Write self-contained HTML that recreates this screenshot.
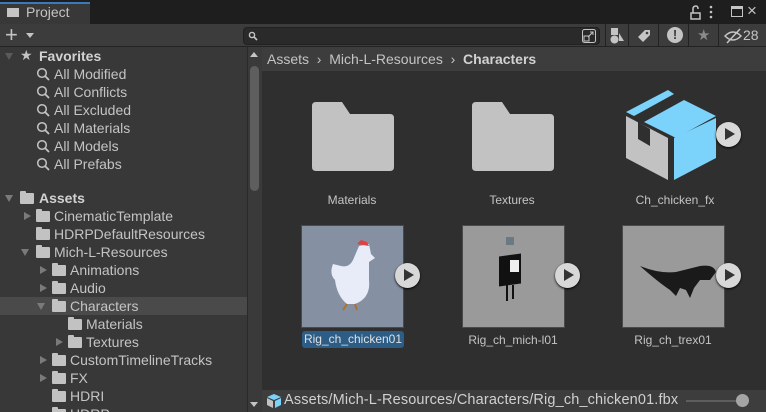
<!DOCTYPE html>
<html><head><style>
*{margin:0;padding:0;box-sizing:border-box}
html,body{width:766px;height:412px;overflow:hidden}
body{background:#383838;font-family:"Liberation Sans",sans-serif;font-size:14px;color:#c4c4c4;position:relative}
.a{position:absolute}
.row{position:absolute;left:0;width:247px;height:18px;line-height:18px;white-space:nowrap}
.tri{position:absolute;top:5px;width:0;height:0}
.tr{border-left:7px solid #7a7a7a;border-top:4px solid transparent;border-bottom:4px solid transparent;top:5px}
.td{border-top:7px solid #7a7a7a;border-left:4px solid transparent;border-right:4px solid transparent;top:6px}
.fd{position:absolute;top:4px;width:14px;height:11px;background:#c2c2c2;border-radius:1px}
.fd:before{content:"";position:absolute;left:0;top:-2px;width:6px;height:3px;background:#c2c2c2;border-radius:1px 1px 0 0}
.mg{position:absolute;left:36px;top:2px}
.lbl{position:absolute;font-size:12px;color:#c4c4c4;text-align:center;width:140px}
.play{position:absolute;width:25px;height:25px;border-radius:50%;background:#d8d8d8;box-shadow:0 1px 2px #000}
.play:after{content:"";position:absolute;left:9px;top:6px;border-left:10px solid #333;border-top:6.5px solid transparent;border-bottom:6.5px solid transparent}
.thumb{position:absolute;width:103px;height:103px;background:#9a9a9a;border:1px solid #4a4a4a}
</style></head><body>
<div class="a" style="left:0;top:0;width:766px;height:24px;background:#1e1e1e"></div>
<div class="a" style="left:0;top:2px;width:90px;height:22px;background:#383838;border-top:2px solid #3a79bb"></div>
<div class="a" style="left:7px;top:8px;width:12px;height:9px;background:#c4c4c4"></div>
<div class="a" style="left:26px;top:4px;font-size:14px;color:#c4c4c4">Project</div>
<svg class="a" style="left:688px;top:3px" width="40" height="18"><path d="M3 10H12V16H3Z M5 10V6Q5 3 8 3Q10 3 10 6" fill="none" stroke="#c4c4c4" stroke-width="1.5"/><circle cx="23" cy="4" r="1.3" fill="#c4c4c4"/><circle cx="23" cy="9" r="1.3" fill="#c4c4c4"/><circle cx="23" cy="14" r="1.3" fill="#c4c4c4"/></svg>
<div class="a" style="left:731px;top:6px;width:12px;height:11px;border:1.5px solid #c4c4c4;border-top-width:3px"></div>
<div class="a" style="left:747px;top:1px;font-size:17px;color:#c4c4c4">×</div>
<!-- toolbar -->
<div class="a" style="left:0;top:24px;width:766px;height:23px;background:#3c3c3c;border-bottom:1px solid #232323"></div>
<div class="a" style="left:5px;top:22px;font-size:22px;color:#c4c4c4">+</div>
<div class="a" style="left:26px;top:33px;border-top:5px solid #c4c4c4;border-left:4px solid transparent;border-right:4px solid transparent"></div>
<div class="a" style="left:243px;top:27px;width:357px;height:18px;background:#2a2a2a;border:1px solid #212121;border-radius:4px"></div>
<svg class="a" style="left:248px;top:31px" width="10" height="10"><circle cx="4" cy="4" r="2.6" fill="none" stroke="#c4c4c4" stroke-width="1.4"/><path d="M6 6L9 9" stroke="#c4c4c4" stroke-width="1.6"/></svg>
<svg class="a" style="left:581px;top:28px" width="16" height="16"><rect x="1.5" y="1.5" width="13" height="13" rx="2" fill="none" stroke="#c4c4c4"/><rect x="3" y="8" width="5" height="5" fill="none" stroke="#c4c4c4"/><path d="M7 9L12 4M9 4H12V7" stroke="#c4c4c4" fill="none"/></svg>
<div class="a" style="left:605px;top:24px;width:1px;height:22px;background:#222"></div>
<div class="a" style="left:628px;top:24px;width:1px;height:22px;background:#222"></div>
<div class="a" style="left:658px;top:24px;width:1px;height:22px;background:#222"></div>
<div class="a" style="left:688px;top:24px;width:1px;height:22px;background:#222"></div>
<div class="a" style="left:718px;top:24px;width:1px;height:22px;background:#222"></div>
<svg class="a" style="left:609px;top:27px" width="16" height="18"><rect x="2" y="1" width="7" height="7" fill="#c4c4c4"/><circle cx="5.5" cy="12.5" r="4" fill="#c4c4c4"/><path d="M10 6L15 14H10Z" fill="#c4c4c4"/></svg>
<svg class="a" style="left:636px;top:28px" width="16" height="16"><path d="M2 9L9 2H14V7L7 14Z" fill="#c4c4c4"/><circle cx="11" cy="5" r="1.3" fill="#3c3c3c"/></svg>
<div class="a" style="left:667px;top:27px;width:16px;height:16px;border-radius:50%;background:#c4c4c4;color:#3c3c3c;font-weight:bold;text-align:center;line-height:16px;font-size:13px">!</div>
<div class="a" style="left:697px;top:26px;font-size:15px;color:#8a8a8a">★</div>
<svg class="a" style="left:724px;top:28px" width="20" height="16"><path d="M1 8Q9 0 17 8Q9 16 1 8Z" fill="none" stroke="#c4c4c4" stroke-width="1.5"/><path d="M3 15L16 1" stroke="#c4c4c4" stroke-width="1.5"/></svg>
<div class="a" style="left:743px;top:27px;font-size:14px;color:#c4c4c4">28</div>
<!-- left panel -->
<div class="a" style="left:247px;top:47px;width:15px;height:365px;background:#3a3a3a;border-left:1px solid #2a2a2a"></div>
<div class="a" style="left:250px;top:66px;width:9px;height:125px;background:#5e5e5e;border-radius:5px"></div>
<div class="a" style="left:250px;top:52px;border-bottom:5px solid #c4c4c4;border-left:4px solid transparent;border-right:4px solid transparent"></div>
<div class="a" style="left:250px;top:402px;border-top:5px solid #c4c4c4;border-left:4px solid transparent;border-right:4px solid transparent"></div>

<svg width="0" height="0" style="position:absolute"><defs><symbol id="m" viewBox="0 0 14 14"><circle cx="6" cy="6" r="4.3" fill="none" stroke="#c4c4c4" stroke-width="1.5"/><path d="M9 9L13 13" stroke="#c4c4c4" stroke-width="1.8"/></symbol></defs></svg>

<div class="row" style="top:47px"><div class="tri td" style="left:5px;border-top-color:#5a5a5a"></div><span class="a" style="left:20px;top:-1px;font-size:14px">★</span><b class="a" style="left:39px;font-size:14px;color:#d2d2d2">Favorites</b></div>
<div class="row" style="top:65px"><svg class="mg" width="14" height="14"><use href="#m"/></svg><span class="a" style="left:54px">All Modified</span></div>
<div class="row" style="top:83px"><svg class="mg" width="14" height="14"><use href="#m"/></svg><span class="a" style="left:54px">All Conflicts</span></div>
<div class="row" style="top:101px"><svg class="mg" width="14" height="14"><use href="#m"/></svg><span class="a" style="left:54px">All Excluded</span></div>
<div class="row" style="top:119px"><svg class="mg" width="14" height="14"><use href="#m"/></svg><span class="a" style="left:54px">All Materials</span></div>
<div class="row" style="top:137px"><svg class="mg" width="14" height="14"><use href="#m"/></svg><span class="a" style="left:54px">All Models</span></div>
<div class="row" style="top:155px"><svg class="mg" width="14" height="14"><use href="#m"/></svg><span class="a" style="left:54px">All Prefabs</span></div>

<div class="row" style="top:189px"><div class="tri td" style="left:5px"></div><div class="fd" style="left:20px"></div><b class="a" style="left:39px;font-size:14px;color:#d2d2d2">Assets</b></div>
<div class="row" style="top:207px"><div class="tri tr" style="left:24px"></div><div class="fd" style="left:36px"></div><span class="a" style="left:54px">CinematicTemplate</span></div>
<div class="row" style="top:225px"><div class="fd" style="left:36px"></div><span class="a" style="left:54px">HDRPDefaultResources</span></div>
<div class="row" style="top:243px"><div class="tri td" style="left:21px"></div><div class="fd" style="left:36px"></div><span class="a" style="left:54px">Mich-L-Resources</span></div>
<div class="row" style="top:261px"><div class="tri tr" style="left:40px"></div><div class="fd" style="left:52px"></div><span class="a" style="left:70px">Animations</span></div>
<div class="row" style="top:279px"><div class="tri tr" style="left:40px"></div><div class="fd" style="left:52px"></div><span class="a" style="left:70px">Audio</span></div>
<div class="row" style="top:297px;background:#4a4a4a"><div class="tri td" style="left:37px"></div><div class="fd" style="left:52px"></div><span class="a" style="left:70px">Characters</span></div>
<div class="row" style="top:315px"><div class="fd" style="left:68px"></div><span class="a" style="left:86px">Materials</span></div>
<div class="row" style="top:333px"><div class="tri tr" style="left:56px"></div><div class="fd" style="left:68px"></div><span class="a" style="left:86px">Textures</span></div>
<div class="row" style="top:351px"><div class="tri tr" style="left:40px"></div><div class="fd" style="left:52px"></div><span class="a" style="left:70px">CustomTimelineTracks</span></div>
<div class="row" style="top:369px"><div class="tri tr" style="left:40px"></div><div class="fd" style="left:52px"></div><span class="a" style="left:70px">FX</span></div>
<div class="row" style="top:387px"><div class="fd" style="left:52px"></div><span class="a" style="left:70px">HDRI</span></div>
<div class="row" style="top:405px;height:7px;overflow:hidden"><div class="fd" style="left:52px"></div><span class="a" style="left:70px">HDRP</span></div>

<!-- right panel -->
<div class="a" style="left:262px;top:47px;width:504px;height:343px;background:#2f2f2f"></div>
<div class="a" style="left:262px;top:47px;width:504px;height:24px;background:#3d3d3d;line-height:24px;font-size:14px;padding-left:5px;color:#c4c4c4">Assets &nbsp;›&nbsp; Mich-L-Resources &nbsp;›&nbsp; <b style="color:#d2d2d2">Characters</b></div>

<svg class="a" style="left:312px;top:100px" width="82" height="72"><path d="M4 2H30L38 14H78Q82 14 82 18V67Q82 71 78 71H4Q0 71 0 67V6Q0 2 4 2Z" fill="#c2c2c2"/></svg>
<svg class="a" style="left:472px;top:100px" width="82" height="72"><path d="M4 2H30L38 14H78Q82 14 82 18V67Q82 71 78 71H4Q0 71 0 67V6Q0 2 4 2Z" fill="#c2c2c2"/></svg>
<div class="lbl" style="left:282px;top:193px">Materials</div>
<div class="lbl" style="left:442px;top:193px">Textures</div>

<svg class="a" style="left:626px;top:88px" width="92" height="92">
<path d="M0 24L42 2L48 6L8 28Z" fill="#7bd3fb"/>
<path d="M18 34L58 12L90 28L50 50Z" fill="#7bd3fb"/>
<path d="M0 28L42 50V92L0 70Z" fill="#c2c2c2"/>
<path d="M48 50L90 30V70L48 92Z" fill="#7bd3fb"/>
<path d="M12 34L24 41V58L12 51Z" fill="#2f2f2f"/>
</svg>
<div class="play" style="left:716px;top:122px"></div>
<div class="lbl" style="left:605px;top:193px">Ch_chicken_fx</div>

<div class="thumb" style="left:301px;top:225px;background:#8590a2"></div>
<svg class="a" style="left:325px;top:240px" width="60" height="80"><path d="M34 6L44 4L46 14L50 18L44 22L44 40Q46 58 30 64L22 64Q12 56 10 40Q4 34 8 24L16 26Q24 28 28 20Z" fill="#e8ecf8"/><path d="M32 4L36 0L42 2L44 6Z" fill="#e04040"/><path d="M22 64L18 70M30 64L32 70" stroke="#b07030" stroke-width="2"/></svg>
<div class="play" style="left:395px;top:263px"></div>
<div class="a" style="left:302px;top:331px;width:102px;height:17px;background:#2c5d87;border-radius:3px;font-size:12px;line-height:17px;text-align:center;color:#e0e0e0">Rig_ch_chicken01</div>

<div class="thumb" style="left:462px;top:225px"></div>
<div class="a" style="left:506px;top:237px;width:8px;height:8px;background:#6a7a80"></div>
<div class="a" style="left:499px;top:255px;width:22px;height:30px;background:#111;transform:skewY(-8deg)"></div>
<div class="a" style="left:510px;top:260px;width:9px;height:12px;background:#eee"></div>
<div class="a" style="left:506px;top:285px;width:2px;height:16px;background:#111"></div>
<div class="a" style="left:512px;top:285px;width:2px;height:14px;background:#111"></div>
<div class="play" style="left:555px;top:263px"></div>
<div class="lbl" style="left:443px;top:333px">Rig_ch_mich-l01</div>

<div class="thumb" style="left:622px;top:225px"></div>
<svg class="a" style="left:640px;top:262px" width="84" height="40"><path d="M0 4Q20 12 36 10L60 4Q74 2 76 10L70 18L60 18L54 26L50 36L46 28L40 26L36 34L30 28Q18 20 0 4Z" fill="#1a1a1a"/></svg>
<div class="play" style="left:716px;top:263px"></div>
<div class="lbl" style="left:603px;top:333px">Rig_ch_trex01</div>

<!-- status bar -->
<div class="a" style="left:262px;top:390px;width:504px;height:22px;background:#3d3d3d"></div>
<svg class="a" style="left:266px;top:393px" width="16" height="16"><path d="M1 4L8 1L15 4L8 7Z" fill="#7bd3fb"/><path d="M1 5L7 8V15L1 12Z" fill="#c2c2c2"/><path d="M9 8L15 5V12L9 15Z" fill="#7bd3fb"/></svg>
<div class="a" style="left:284px;top:392px;font-size:14.5px;letter-spacing:0.15px;color:#d0d0d0;white-space:nowrap">Assets/Mich-L-Resources/Characters/Rig_ch_chicken01.fbx</div>
<div class="a" style="left:686px;top:400px;width:56px;height:2px;background:#5e5e5e"></div>
<div class="a" style="left:736px;top:394px;width:13px;height:13px;border-radius:50%;background:#a5a5a5"></div>
</body></html>
